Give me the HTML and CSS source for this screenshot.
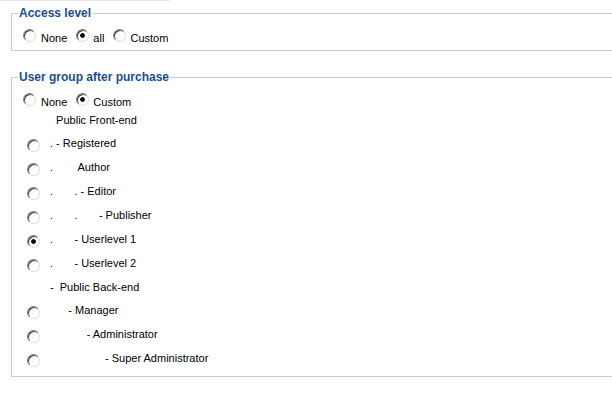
FILE: index.html
```html
<!DOCTYPE html>
<html lang="en">
<head>
  <meta charset="UTF-8">
  <title>Product access</title>
  <link rel="stylesheet" href="styles.css">
</head>
<body>
  <div class="topline"></div>

  <div class="page">
    <fieldset class="box box-access">
      <legend>Access level</legend>
      <div class="choice-row">
        <input type="radio" name="access" id="access_none"><label for="access_none">None</label>
        <input type="radio" name="access" id="access_all" checked><label for="access_all">all</label>
        <input type="radio" name="access" id="access_custom"><label for="access_custom">Custom</label>
      </div>
    </fieldset>

    <fieldset class="box box-group">
      <legend>User group after purchase</legend>
      <div class="choice-row">
        <input type="radio" name="group_mode" id="group_none"><label for="group_none">None</label>
        <input type="radio" name="group_mode" id="group_custom" checked><label for="group_custom">Custom</label>
      </div>

      <div class="group-list">
        <div class="group-row no-radio">
          <span class="group-name">&nbsp;&nbsp;Public Front-end</span>
        </div>
        <div class="group-row">
          <input type="radio" name="group">
          <span class="group-name">. - Registered</span>
        </div>
        <div class="group-row">
          <input type="radio" name="group">
          <span class="group-name">.&nbsp;&nbsp;&nbsp;&nbsp;&nbsp;&nbsp;&nbsp;&nbsp;Author</span>
        </div>
        <div class="group-row">
          <input type="radio" name="group">
          <span class="group-name">.&nbsp;&nbsp;&nbsp;&nbsp;&nbsp;&nbsp;&nbsp;. - Editor</span>
        </div>
        <div class="group-row">
          <input type="radio" name="group">
          <span class="group-name">.&nbsp;&nbsp;&nbsp;&nbsp;&nbsp;&nbsp;&nbsp;.&nbsp;&nbsp;&nbsp;&nbsp;&nbsp;&nbsp;&nbsp;- Publisher</span>
        </div>
        <div class="group-row">
          <input type="radio" name="group" checked>
          <span class="group-name">.&nbsp;&nbsp;&nbsp;&nbsp;&nbsp;&nbsp;&nbsp;- Userlevel 1</span>
        </div>
        <div class="group-row">
          <input type="radio" name="group">
          <span class="group-name">.&nbsp;&nbsp;&nbsp;&nbsp;&nbsp;&nbsp;&nbsp;- Userlevel 2</span>
        </div>
        <div class="group-row no-radio">
          <span class="group-name">-&nbsp;&nbsp;Public Back-end</span>
        </div>
        <div class="group-row">
          <input type="radio" name="group">
          <span class="group-name">&nbsp;&nbsp;&nbsp;&nbsp;&nbsp;&nbsp;- Manager</span>
        </div>
        <div class="group-row">
          <input type="radio" name="group">
          <span class="group-name">&nbsp;&nbsp;&nbsp;&nbsp;&nbsp;&nbsp;&nbsp;&nbsp;&nbsp;&nbsp;&nbsp;&nbsp;- Administrator</span>
        </div>
        <div class="group-row">
          <input type="radio" name="group">
          <span class="group-name">&nbsp;&nbsp;&nbsp;&nbsp;&nbsp;&nbsp;&nbsp;&nbsp;&nbsp;&nbsp;&nbsp;&nbsp;&nbsp;&nbsp;&nbsp;&nbsp;&nbsp;&nbsp;- Super Administrator</span>
        </div>
      </div>
    </fieldset>
  </div>
</body>
</html>
```

FILE: styles.css
```css
body {
  margin: 0;
  background: #ffffff;
  color: #000000;
  font-family: "Liberation Sans", Arial, sans-serif;
  font-size: 11px;
  overflow: hidden;
}

.topline {
  width: 170px;
  height: 1px;
  background: #e6e6e6;
}

.page {
  padding-left: 11px;
}

/* fieldsets */
.box {
  margin: 0;
  padding: 6px 0 6px 6px;
  border: 1px solid #cccccc;
  border-right: none;
}

.box-access {
  margin-top: 5px;
}

.box-group {
  margin-top: 19px;
  padding-top: 6px;
  padding-bottom: 6px;
}

.box legend {
  padding: 0 1px;
  color: #1a4d8f;
  font-size: 12px;
  font-weight: bold;
}

/* radios */
input[type="radio"] {
  -webkit-appearance: none;
  appearance: none;
  box-sizing: border-box;
  width: 13px;
  height: 13px;
  margin: 3px 4px 0 6px;
  border: 1px solid;
  border-color: #808080 #dcdcdc #dcdcdc #808080;
  border-radius: 50%;
  background: #ffffff;
  box-shadow: inset 1px 1px 0 #404040;
}

input[type="radio"]:checked {
  background: radial-gradient(circle at 50% 50%, #000000 0, #000000 2px, #ffffff 2.6px);
}

.choice-row input[type="radio"]:first-child {
  margin-left: 5px;
  margin-right: 5px;
}

.choice-row label {
  color: #000000;
}

/* group list */
.group-row {
  display: flex;
  align-items: center;
  height: 24px;
}

.group-row.no-radio {
  height: 23px;
  padding-left: 32px;
}

.group-row input[type="radio"] {
  flex: none;
  margin: 4px 10px 0 9px;
}

.group-name {
  white-space: nowrap;
}
```
